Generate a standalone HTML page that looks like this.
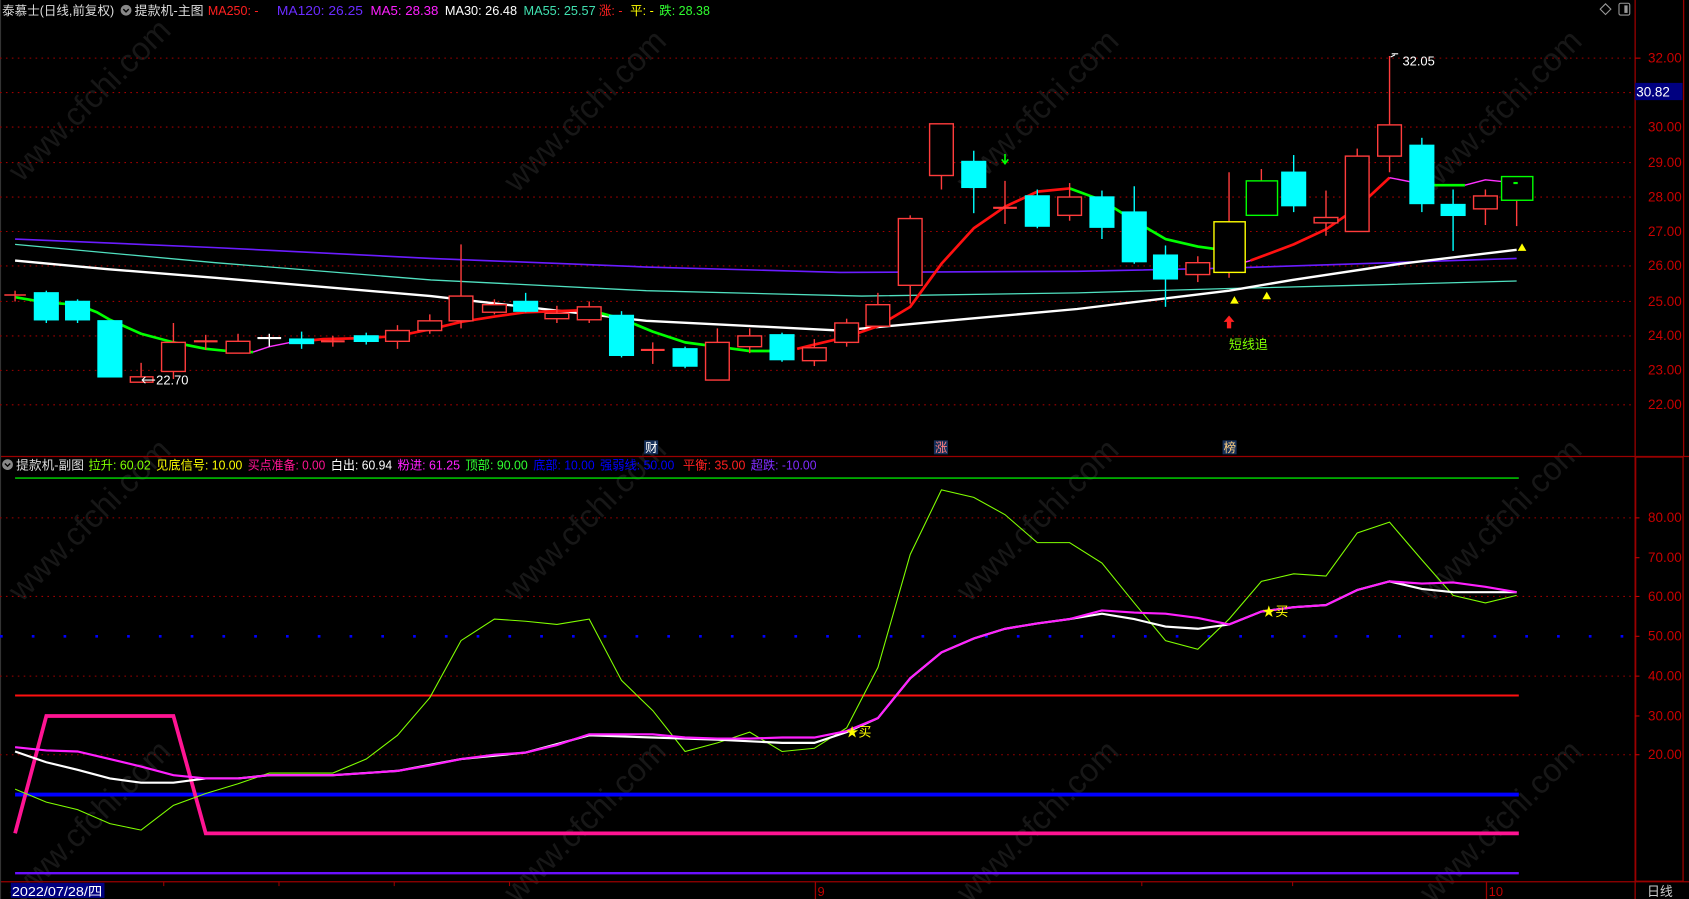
<!DOCTYPE html><html><head><meta charset="utf-8"><style>html,body{margin:0;padding:0;background:#000;overflow:hidden}svg{display:block}text{font-family:"Liberation Sans","Noto Sans CJK SC",sans-serif}</style></head><body>
<svg width="1689" height="899" viewBox="0 0 1568 835" preserveAspectRatio="none" xmlns="http://www.w3.org/2000/svg">
<rect width="1568" height="835" fill="#000"/>
<g fill="#171717" font-size="30">
<text transform="translate(20,170) rotate(-45)">www.cfchi.com</text>
<text transform="translate(480,180) rotate(-45)">www.cfchi.com</text>
<text transform="translate(900,180) rotate(-45)">www.cfchi.com</text>
<text transform="translate(1330,180) rotate(-45)">www.cfchi.com</text>
<text transform="translate(20,560) rotate(-45)">www.cfchi.com</text>
<text transform="translate(480,560) rotate(-45)">www.cfchi.com</text>
<text transform="translate(900,560) rotate(-45)">www.cfchi.com</text>
<text transform="translate(1330,560) rotate(-45)">www.cfchi.com</text>
<text transform="translate(20,840) rotate(-45)">www.cfchi.com</text>
<text transform="translate(480,840) rotate(-45)">www.cfchi.com</text>
<text transform="translate(900,840) rotate(-45)">www.cfchi.com</text>
<text transform="translate(1330,840) rotate(-45)">www.cfchi.com</text>
</g>
<g stroke="#9a0000" stroke-width="1.2" fill="none">
<line x1="1518" y1="0" x2="1518" y2="835"/>
<line x1="0" y1="424" x2="1568" y2="424"/>
<line x1="0" y1="819" x2="1568" y2="819"/>
<rect x="1518.5" y="424.5" width="44" height="394"/>
<line x1="1563" y1="0" x2="1563" y2="424"/>
<line x1="757" y1="819" x2="757" y2="835"/>
<line x1="1380" y1="819" x2="1380" y2="835"/>
</g>
<line x1="0.5" y1="0" x2="0.5" y2="835" stroke="#333"/>
<g stroke="#a00000" stroke-dasharray="1.5,4" stroke-width="1">
<line x1="0" y1="54" x2="1518" y2="54"/><line x1="0" y1="86" x2="1518" y2="86"/><line x1="0" y1="118" x2="1518" y2="118"/><line x1="0" y1="151" x2="1518" y2="151"/><line x1="0" y1="183" x2="1518" y2="183"/><line x1="0" y1="215" x2="1518" y2="215"/><line x1="0" y1="247" x2="1518" y2="247"/><line x1="0" y1="280" x2="1518" y2="280"/><line x1="0" y1="312" x2="1518" y2="312"/><line x1="0" y1="344" x2="1518" y2="344"/><line x1="0" y1="376" x2="1518" y2="376"/>
<line x1="0" y1="481" x2="1518" y2="481"/><line x1="0" y1="554" x2="1518" y2="554"/><line x1="0" y1="628" x2="1518" y2="628"/><line x1="0" y1="701" x2="1518" y2="701"/>
</g>
<line x1="0" y1="591" x2="1518" y2="591" stroke="#0000ff" stroke-width="2.5" stroke-dasharray="2.5,27"/>
<g fill="#c80000" font-size="12.5">
<text x="1530" y="58">32.00</text><text x="1530" y="122">30.00</text><text x="1530" y="155">29.00</text><text x="1530" y="187">28.00</text><text x="1530" y="219">27.00</text><text x="1530" y="251">26.00</text><text x="1530" y="284">25.00</text><text x="1530" y="316">24.00</text><text x="1530" y="348">23.00</text><text x="1530" y="380">22.00</text>
<text x="1530" y="485">80.00</text><text x="1530" y="522">70.00</text><text x="1530" y="558">60.00</text><text x="1530" y="595">50.00</text><text x="1530" y="632">40.00</text><text x="1530" y="669">30.00</text><text x="1530" y="705">20.00</text>
</g>
<g stroke="#c80000"><line x1="1518" y1="54" x2="1523" y2="54"/><line x1="1518" y1="481" x2="1522" y2="481"/><line x1="1518" y1="518" x2="1522" y2="518"/><line x1="1518" y1="554" x2="1522" y2="554"/><line x1="1518" y1="591" x2="1522" y2="591"/><line x1="1518" y1="628" x2="1522" y2="628"/><line x1="1518" y1="665" x2="1522" y2="665"/><line x1="1518" y1="701" x2="1522" y2="701"/></g>
<rect x="1518" y="77" width="44" height="16" fill="#000080"/><text x="1519" y="89.5" fill="#fff" font-size="12.5">30.82</text>
<rect x="1487" y="5" width="7" height="7" fill="none" stroke="#999" transform="rotate(45 1490.5 8.5)"/>
<rect x="1503" y="3" width="10" height="11" rx="1.5" fill="none" stroke="#999"/><rect x="1508" y="5" width="3" height="7" fill="#999"/>
<g font-size="11.6">
<text x="2" y="14" fill="#ddd" textLength="104" lengthAdjust="spacingAndGlyphs">泰慕士(日线,前复权)</text>
<circle cx="117" cy="9.5" r="5" fill="#888"/><path d="M114.5 8.5l2.5 2.5 2.5-2.5" stroke="#000" fill="none" stroke-width="1.3"/>
<text x="125" y="14" fill="#ddd" textLength="64" lengthAdjust="spacingAndGlyphs">提款机-主图</text>
<text x="193" y="14" fill="#ff2020">MA250: -</text>
<text x="257" y="14" fill="#6a2cff" textLength="80" lengthAdjust="spacingAndGlyphs">MA120: 26.25</text>
<text x="344" y="14" fill="#ff20ff" textLength="63" lengthAdjust="spacingAndGlyphs">MA5: 28.38</text>
<text x="413" y="14" fill="#fff" textLength="67" lengthAdjust="spacingAndGlyphs">MA30: 26.48</text>
<text x="486" y="14" fill="#40e0b0" textLength="67" lengthAdjust="spacingAndGlyphs">MA55: 25.57</text>
<text x="556" y="14" fill="#ff2020">涨: -</text>
<text x="585" y="14" fill="#ffff00">平: -</text>
<text x="612" y="14" fill="#30ff30">跌: 28.38</text>
</g>
<g font-size="11.6">
<circle cx="7" cy="431.5" r="5" fill="#888"/><path d="M4.5 430.5l2.5 2.5 2.5-2.5" stroke="#000" fill="none" stroke-width="1.3"/>
<text x="15" y="436" fill="#ddd" textLength="63" lengthAdjust="spacingAndGlyphs">提款机-副图</text>
<text x="82" y="436" fill="#80ff00" textLength="58" lengthAdjust="spacingAndGlyphs">拉升: 60.02</text>
<text x="145" y="436" fill="#ffff00" textLength="80" lengthAdjust="spacingAndGlyphs">见底信号: 10.00</text>
<text x="230" y="436" fill="#ff1493" textLength="72" lengthAdjust="spacingAndGlyphs">买点准备: 0.00</text>
<text x="307" y="436" fill="#fff" textLength="57" lengthAdjust="spacingAndGlyphs">白出: 60.94</text>
<text x="369" y="436" fill="#ff20ff" textLength="58" lengthAdjust="spacingAndGlyphs">粉进: 61.25</text>
<text x="432" y="436" fill="#30ff30" textLength="58" lengthAdjust="spacingAndGlyphs">顶部: 90.00</text>
<text x="495" y="436" fill="#0000ff" textLength="57" lengthAdjust="spacingAndGlyphs">底部: 10.00</text>
<text x="557" y="436" fill="#0000ff" textLength="69" lengthAdjust="spacingAndGlyphs">强弱线: 50.00</text>
<text x="634" y="436" fill="#ff2020" textLength="58" lengthAdjust="spacingAndGlyphs">平衡: 35.00</text>
<text x="697" y="436" fill="#7f2cff" textLength="61" lengthAdjust="spacingAndGlyphs">超跌: -10.00</text>
</g>
<polyline fill="none" stroke="#6a1cff" stroke-width="1.5" points="14,222 200,230 400,240 600,248 780,253 1000,252 1141,249 1260,245 1408,240"/>
<polyline fill="none" stroke="#50e0c0" stroke-width="1.2" points="14,227 200,244 400,260 600,270 800,275 1000,272 1141,268 1260,265 1408,261"/>
<polyline fill="none" stroke="#fff" stroke-width="2.2" points="14,242 100,250 200,258 400,275 600,298 780,307 900,296 1000,287 1100,275 1141,270 1200,260 1300,245 1408,232"/>
<g fill="none" stroke-width="2.5" stroke-linejoin="round">
<polyline stroke="#00ff00" points="14,276 43,281 72,283 90,290 102,297 131,310 161,318 191,324 221,327 235,327"/>
<polyline stroke="#ff30ff" stroke-width="1.3" points="235,327 250,322 270,318"/>
<polyline stroke="#ff1010" points="270,318 300,315 340,314 369,312 399,306 428,299 459,294 488,290 517,289 547,288"/>
<polyline stroke="#00ff00" points="547,288 577,296 606,308 636,318 666,322 696,326 726,326"/>
<polyline stroke="#ff1010" points="740,324 756,320 786,313 815,303 845,285 874,245 904,212 933,192 963,178 993,175"/>
<polyline stroke="#00ff00" points="993,175 1023,186 1053,205 1082,222 1112,229 1141,233"/>
<polyline stroke="#ff30ff" stroke-width="1.3" points="1147,246 1161,242"/>
<polyline stroke="#ff1010" points="1161,242 1201,227 1231,213 1260,193 1290,165"/>
<polyline stroke="#ff30ff" stroke-width="1.3" points="1290,165 1320,171 1340,172"/>
<polyline stroke="#00ff00" points="1330,172 1360,172"/>
<polyline stroke="#ff30ff" stroke-width="1.3" points="1360,172 1379,167 1408,170"/>
</g>
<g stroke-width="1.3">
<g stroke="#ff3c3c" fill="#000">
<line x1="4" y1="274" x2="24" y2="274"/><line x1="14" y1="270" x2="14" y2="280"/>
<line x1="131" y1="337" x2="131" y2="350"/><rect x="121" y="350" width="21" height="5"/>
<line x1="161" y1="300" x2="161" y2="352"/><rect x="150" y="318" width="22" height="27"/>
<line x1="180" y1="317" x2="202" y2="317" stroke-width="2"/><line x1="191" y1="311" x2="191" y2="325"/>
<line x1="221" y1="310" x2="221" y2="328"/><rect x="210" y="317" width="22" height="11"/>
<line x1="298" y1="317" x2="320" y2="317" stroke-width="2"/><line x1="309" y1="312" x2="309" y2="322"/>
<line x1="369" y1="302" x2="369" y2="324"/><rect x="358" y="307" width="22" height="10"/>
<line x1="399" y1="292" x2="399" y2="310"/><rect x="388" y="298" width="22" height="9"/>
<line x1="428" y1="227" x2="428" y2="305"/><rect x="417" y="275" width="22" height="23"/>
<line x1="459" y1="278" x2="459" y2="292"/><rect x="448" y="283" width="22" height="7"/>
<line x1="517" y1="284" x2="517" y2="300"/><rect x="506" y="291" width="22" height="5"/>
<line x1="547" y1="280" x2="547" y2="300"/><rect x="536" y="285" width="22" height="12"/>
<line x1="595" y1="325" x2="617" y2="325" stroke-width="2"/><line x1="606" y1="318" x2="606" y2="338"/>
<line x1="666" y1="305" x2="666" y2="353"/><rect x="655" y="318" width="22" height="35"/>
<line x1="696" y1="305" x2="696" y2="328"/><rect x="685" y="312" width="22" height="10"/>
<line x1="756" y1="315" x2="756" y2="340"/><rect x="745" y="323" width="22" height="12"/>
<line x1="786" y1="296" x2="786" y2="322"/><rect x="775" y="300" width="22" height="18"/>
<line x1="815" y1="272" x2="815" y2="304"/><rect x="804" y="283" width="22" height="20"/>
<line x1="845" y1="200" x2="845" y2="282"/><rect x="834" y="203" width="22" height="62"/>
<rect x="863" y="115" width="22" height="48"/><line x1="874" y1="163" x2="874" y2="176"/>
<line x1="922" y1="193" x2="944" y2="193" stroke-width="2"/><line x1="933" y1="168" x2="933" y2="208"/>
<line x1="993" y1="170" x2="993" y2="205"/><rect x="982" y="183" width="22" height="17"/>
<line x1="1112" y1="238" x2="1112" y2="262"/><rect x="1101" y="244" width="22" height="11"/>
<line x1="1231" y1="177" x2="1231" y2="219"/><rect x="1220" y="202" width="22" height="5"/>
<line x1="1260" y1="138" x2="1260" y2="215"/><rect x="1249" y="145" width="22" height="70"/>
<line x1="1290" y1="52" x2="1290" y2="160"/><rect x="1279" y="116" width="22" height="29"/>
<line x1="1379" y1="176" x2="1379" y2="209"/><rect x="1368" y="182" width="22" height="12"/>
</g>
<g stroke="#00ffff" fill="#00ffff">
<line x1="43" y1="270" x2="43" y2="300"/><rect x="32" y="272" width="22" height="25"/>
<line x1="72" y1="278" x2="72" y2="300"/><rect x="61" y="280" width="22" height="17"/>
<rect x="91" y="298" width="22" height="52"/>
<line x1="280" y1="308" x2="280" y2="324"/><rect x="269" y="315" width="22" height="4"/>
<line x1="340" y1="309" x2="340" y2="320"/><rect x="329" y="312" width="22" height="5"/>
<line x1="488" y1="272" x2="488" y2="290"/><rect x="477" y="280" width="22" height="9"/>
<line x1="577" y1="289" x2="577" y2="332"/><rect x="566" y="293" width="22" height="37"/>
<line x1="636" y1="322" x2="636" y2="342"/><rect x="625" y="324" width="22" height="16"/>
<line x1="726" y1="309" x2="726" y2="336"/><rect x="715" y="311" width="22" height="23"/>
<line x1="904" y1="140" x2="904" y2="198"/><rect x="893" y="150" width="22" height="24"/>
<line x1="963" y1="176" x2="963" y2="212"/><rect x="952" y="182" width="22" height="28"/>
<line x1="1023" y1="177" x2="1023" y2="222"/><rect x="1012" y="183" width="22" height="28"/>
<line x1="1053" y1="173" x2="1053" y2="245"/><rect x="1042" y="197" width="22" height="46"/>
<line x1="1082" y1="228" x2="1082" y2="285"/><rect x="1071" y="237" width="22" height="22"/>
<line x1="1201" y1="144" x2="1201" y2="197"/><rect x="1190" y="160" width="22" height="31"/>
<line x1="1320" y1="128" x2="1320" y2="197"/><rect x="1309" y="135" width="22" height="54"/>
<line x1="1349" y1="176" x2="1349" y2="233"/><rect x="1338" y="190" width="22" height="10"/>
</g>
<line x1="239" y1="314" x2="261" y2="314" stroke="#fff" stroke-width="2"/><line x1="250" y1="310" x2="250" y2="322" stroke="#fff"/>
<line x1="1141" y1="160" x2="1141" y2="258" stroke="#ff3c3c"/><rect x="1127" y="206" width="29" height="47" fill="#000" stroke="#ffff00"/>
<line x1="1171" y1="157" x2="1171" y2="168" stroke="#ff3c3c"/><rect x="1157" y="168" width="29" height="32" fill="#000" stroke="#00ff00"/>
<line x1="1408" y1="186" x2="1408" y2="210" stroke="#ff3c3c"/><rect x="1394" y="164" width="29" height="22" fill="#000" stroke="#00ff00"/>
<line x1="1405" y1="170" x2="1409" y2="170" stroke="#00ff00" stroke-width="2"/>
</g>
<g fill="#ffff00"><path d="M1146 275l-4 7h8z"/><path d="M1176 271l-4 7h8z"/><path d="M1413 226l-4 7h8z"/></g>
<path d="M1141 293l-5 6h3v6h4v-6h3z" fill="#ff2020"/>
<text x="1141" y="324" fill="#80ff00" font-size="12">短线追</text>
<path d="M933 143v8M930 148l3 4 3-4" stroke="#00ff00" fill="none" stroke-width="1.5"/>
<path d="M132 353h12M135 350l-3 3 3 3" stroke="#fff" fill="none"/><text x="145" y="357" fill="#fff" font-size="12">22.70</text>
<path d="M1291 53l4 -2M1292 50h6" stroke="#fff" fill="none"/><text x="1302" y="61" fill="#fff" font-size="12">32.05</text>
<g font-size="11.5" fill="#fff"><rect x="598" y="409" width="13" height="13" fill="#16305a"/><text x="599" y="420">财</text>
<rect x="867" y="409" width="13" height="13" fill="#16305a"/><text x="868" y="420" fill="#ff8080">涨</text>
<rect x="1135" y="409" width="13" height="13" fill="#16305a"/><text x="1136" y="420" fill="#ffd080">榜</text></g>
<line x1="14" y1="444" x2="1410" y2="444" stroke="#00e000" stroke-width="1.3"/>
<line x1="14" y1="646" x2="1410" y2="646" stroke="#ff1010" stroke-width="1.8"/>
<line x1="14" y1="738" x2="1410" y2="738" stroke="#0000ff" stroke-width="3.5"/>
<line x1="14" y1="811" x2="1410" y2="811" stroke="#6a10ff" stroke-width="2.2"/>
<polyline fill="none" stroke="#ff1493" stroke-width="3.5" points="14,774 43,665 161,665 191,774 1410,774"/>
<polyline fill="none" stroke="#80ff00" stroke-width="1" points="14,733 43,745 72,752 102,765 131,771 161,748 191,737 221,728 250,718 280,718 309,718 340,705 369,683 399,648 428,595 459,575 488,577 517,580 547,575 577,632 606,660 636,698 666,690 696,680 726,698 756,695 786,676 815,620 845,515 874,455 904,462 933,478 963,504 993,504 1023,523 1053,560 1082,595 1112,603 1141,575 1171,540 1201,533 1231,535 1260,495 1290,485 1320,520 1349,553 1379,560 1408,553"/>
<polyline fill="none" stroke="#fff" stroke-width="2" points="14,698 43,708 72,715 102,723 131,727 161,727 191,723 221,723 250,720 309,720 369,716 428,705 488,699 547,683 606,685 666,687 726,690 756,690 786,680 815,667 845,630 874,606 904,593 933,584 963,579 993,575 1023,570 1053,575 1082,582 1112,584 1141,580 1171,568 1201,564 1231,562 1260,548 1290,540 1320,547 1349,550 1379,550 1408,550"/>
<polyline fill="none" stroke="#ff20ff" stroke-width="2" points="14,694 43,697 72,698 102,705 131,712 161,720 191,723 221,723 250,720 280,720 309,720 340,718 369,716 399,711 428,705 459,701 488,699 517,692 547,682 577,682 606,682 636,685 666,686 696,686 726,685 756,685 786,679 815,667 845,630 874,606 904,593 933,584 963,579 993,575 1023,567 1053,569 1082,570 1112,574 1141,580 1171,568 1201,564 1231,562 1260,548 1290,540 1320,542 1349,541 1379,545 1408,550"/>
<g fill="#ffff00" font-size="12"><text x="785" y="684">★买</text><text x="1172" y="572">★买</text></g>
<rect x="10" y="820" width="87" height="14" fill="#000080"/><text x="11" y="832" fill="#fff" font-size="12" textLength="84" lengthAdjust="spacingAndGlyphs">2022/07/28/四</text>
<g stroke="#9a0000"><line x1="152" y1="819" x2="152" y2="823"/><line x1="259" y1="819" x2="259" y2="823"/><line x1="366" y1="819" x2="366" y2="823"/><line x1="473" y1="819" x2="473" y2="823"/><line x1="1060" y1="819" x2="1060" y2="823"/><line x1="1200" y1="819" x2="1200" y2="823"/></g>
<text x="759" y="832" fill="#c00000" font-size="12">9</text><text x="1382" y="832" fill="#c00000" font-size="12">10</text>
<text x="1529" y="832" fill="#ccc" font-size="12">日线</text>
</svg>
</body></html>
